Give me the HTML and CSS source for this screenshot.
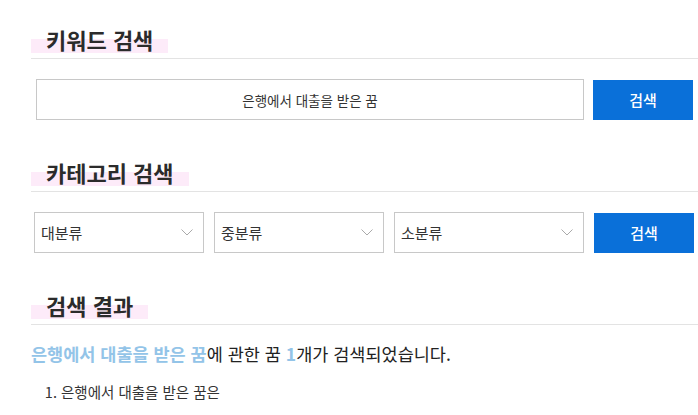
FILE: index.html
```html
<!DOCTYPE html>
<html lang="ko">
<head>
<meta charset="utf-8">
<link rel="stylesheet" href="styles.css">
</head>
<body>
<div class="page">
  <section class="block">
    <div class="title-wrap"><h2 class="title">키워드 검색</h2></div>
    <div class="row keyword-row">
      <div class="keyword-input">은행에서 대출을 받은 꿈</div>
      <button class="btn">검색</button>
    </div>
  </section>
  <section class="block">
    <div class="title-wrap"><h2 class="title">카테고리 검색</h2></div>
    <div class="row cat-row">
      <div class="select s1"><span>대분류</span><svg class="chev" viewBox="0 0 12 7" width="12" height="7"><path d="M0.5 0.5 L6 6 L11.5 0.5" fill="none" stroke="#aaa" stroke-width="1"/></svg></div>
      <div class="select s2"><span>중분류</span><svg class="chev" viewBox="0 0 12 7" width="12" height="7"><path d="M0.5 0.5 L6 6 L11.5 0.5" fill="none" stroke="#aaa" stroke-width="1"/></svg></div>
      <div class="select s3"><span>소분류</span><svg class="chev" viewBox="0 0 12 7" width="12" height="7"><path d="M0.5 0.5 L6 6 L11.5 0.5" fill="none" stroke="#aaa" stroke-width="1"/></svg></div>
      <button class="btn btn2">검색</button>
    </div>
  </section>
  <section class="block">
    <div class="title-wrap"><h2 class="title">검색 결과</h2></div>
    <p class="result"><strong class="hl">은행에서 대출을 받은 꿈</strong>에 관한 꿈 <strong class="hl">1</strong>개가 검색되었습니다.</p>
    <ol class="list">
      <li>은행에서 대출을 받은 꿈은</li>
    </ol>
  </section>
</div>
</body>
</html>
```

FILE: styles.css
```css
* { box-sizing: border-box; }
html, body { margin: 0; padding: 0; background: #fff; }
body {
  font-family: "Noto Sans CJK KR", "Noto Sans", sans-serif;
  color: #222;
  overflow: hidden;
}
.page {
  padding: 25px 0 0 31px;
}
.block { margin-bottom: 38px; }
.block:last-child { margin-bottom: 0; }
.title-wrap {
  display: flex;
  border-bottom: 1px solid #e3e3e3;
  padding-bottom: 5px;
}
.title {
  margin: 0;
  padding: 0 15px;
  font-size: 22px;
  font-weight: 700;
  line-height: 28px;
  height: 28px;
  color: #2b2b2b;
  background: linear-gradient(to bottom, transparent 50%, #fdebf9 50%);
}
.row {
  display: flex;
  align-items: center;
  margin-top: 20px;
}
.keyword-input {
  margin-left: 5px;
  width: 548px;
  height: 41px;
  border: 1px solid #c8c8c8;
  display: flex;
  align-items: center;
  justify-content: center;
  font-size: 13.5px;
  color: #333;
}
.btn {
  margin-left: 9px;
  width: 100px;
  height: 40px;
  border: 0;
  background: #0a70d9;
  color: #fff;
  font-family: "Noto Sans CJK KR", sans-serif;
  font-size: 15px;
  font-weight: 500;
  padding: 0;
}
.cat-row { margin-top: 20px; }
.select {
  height: 41px;
  border: 1px solid #c8c8c8;
  display: flex;
  align-items: center;
  justify-content: space-between;
  padding: 0 10px 0 6px;
  font-size: 15px;
  color: #333;
}
.s1 { margin-left: 3px; width: 170px; }
.s2 { margin-left: 10px; width: 170px; }
.s3 { margin-left: 10px; width: 190px; }
.btn2 { margin-left: 10px; }
.chev { display: block; }
.result {
  margin: 17px 0 0 0;
  font-size: 17.5px;
  line-height: 24px;
  color: #222;
}
.hl { color: #93c4e8; font-weight: 700; }
.list {
  margin: 16px 0 0 0;
  padding-left: 30px;
  font-size: 14.5px;
  line-height: 20px;
  color: #333;
}
```
